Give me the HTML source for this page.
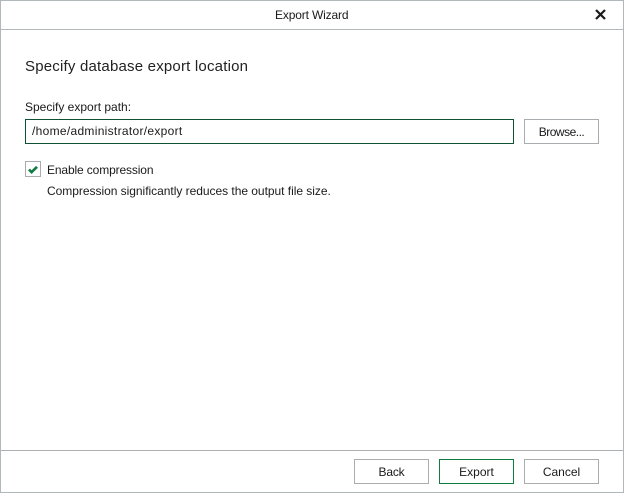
<!DOCTYPE html>
<html><head><meta charset="utf-8">
<style>
html,body{margin:0;padding:0;background:#fff}
#w{position:relative;width:624px;height:493px;overflow:hidden;background:#fff;font-family:"Liberation Sans",sans-serif;font-size:12px;color:#1a1a1a}
#w div{position:absolute;box-sizing:border-box;white-space:nowrap}
.t{line-height:16px}
.b{width:75px;height:25px;border:1px solid #a9adb0;background:#fff;text-align:center;line-height:24px;color:#1a1a1a}
</style></head><body>
<div id="w">
<div style="left:0;top:0;width:624px;height:493px;border:1px solid #b2b7ba"></div>
<div style="left:1px;top:29px;width:622px;height:1px;background:#b2b7ba"></div>
<div style="left:1px;top:450px;width:622px;height:1px;background:#adb1b3"></div>
<div class="t" style="left:275px;top:7px;width:73px;letter-spacing:-.15px;text-align:center">Export Wizard</div>
<svg style="position:absolute;left:595px;top:9px" width="11" height="11" viewBox="0 0 11 11"><path d="M1 1L10 10M10 1L1 10" stroke="#1a1a1a" stroke-width="2.2" fill="none"/></svg>
<div style="left:25px;top:56px;font-size:15px;line-height:20px;letter-spacing:.2px;color:#222;margin-top:1px">Specify database export location</div>
<div class="t" style="left:25px;top:99px">Specify export path:</div>
<div style="left:25px;top:119px;width:489px;height:25px;border:1px solid #0f5132;line-height:23px;padding-left:6px;letter-spacing:.3px">/home/administrator/export</div>
<div class="b" style="left:524px;top:119px;letter-spacing:-.5px">Browse...</div>
<div style="left:25px;top:161px;width:16px;height:16px;border:1px solid #a9adb0"></div>
<svg style="position:absolute;left:25px;top:161px" width="16" height="16" viewBox="0 0 16 16"><path d="M4 8.5L6.6 11.2L12 5.8" stroke="#107c41" stroke-width="2.6" fill="none"/></svg>
<div class="t" style="left:47px;top:162px;letter-spacing:-.13px">Enable compression</div>
<div class="t" style="left:47px;top:183px;letter-spacing:-.03px">Compression significantly reduces the output file size.</div>
<div class="b" style="left:354px;top:459px;letter-spacing:-.2px">Back</div>
<div class="b" style="left:439px;top:459px;border-color:#107c41">Export</div>
<div class="b" style="left:524px;top:459px">Cancel</div>
</div>
</body></html>
